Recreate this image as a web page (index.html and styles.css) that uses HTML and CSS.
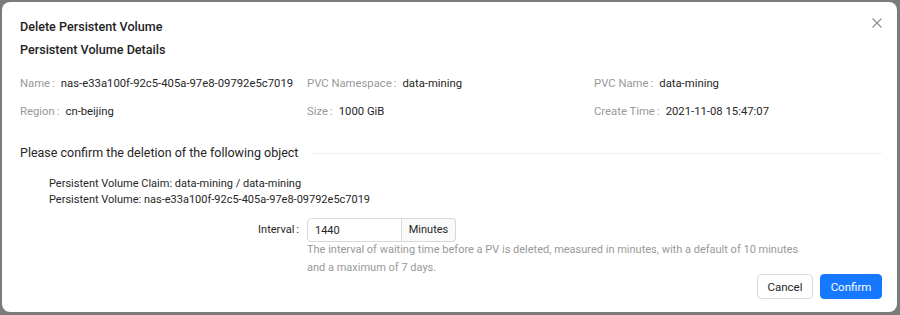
FILE: index.html
```html
<!DOCTYPE html>
<html>
<head>
<meta charset="utf-8">
<link rel="stylesheet" href="styles.css">
</head>
<body>
<div class="backdrop">
  <div class="modal">
    <div class="modal-header">
      <div class="modal-title">Delete Persistent Volume</div>
      <button class="close" aria-label="Close">
        <svg width="10" height="10" viewBox="0 0 10 10"><path d="M0.5 0.5L9.5 9.5M9.5 0.5L0.5 9.5" stroke="#8c8c8c" stroke-width="1.1" fill="none"/></svg>
      </button>
    </div>
    <div class="section-title">Persistent Volume Details</div>
    <div class="details">
      <div class="item"><span class="label">Name</span><span class="colon">:</span><span class="value">nas-e33a100f-92c5-405a-97e8-09792e5c7019</span></div>
      <div class="item"><span class="label">PVC Namespace</span><span class="colon">:</span><span class="value">data-mining</span></div>
      <div class="item"><span class="label">PVC Name</span><span class="colon">:</span><span class="value">data-mining</span></div>
      <div class="item"><span class="label">Region</span><span class="colon">:</span><span class="value">cn-beijing</span></div>
      <div class="item"><span class="label">Size</span><span class="colon">:</span><span class="value">1000 GiB</span></div>
      <div class="item"><span class="label">Create Time</span><span class="colon">:</span><span class="value">2021-11-08 15:47:07</span></div>
    </div>
    <div class="divider"><span class="divider-text">Please confirm the deletion of the following object</span><span class="divider-line"></span></div>
    <div class="objects">
      <div>Persistent Volume Claim: data-mining / data-mining</div>
      <div>Persistent Volume: nas-e33a100f-92c5-405a-97e8-09792e5c7019</div>
    </div>
    <div class="form-row">
      <div class="form-label">Interval<span class="colon">:</span></div>
      <div class="form-control">
        <div class="input-group">
          <input class="input" value="1440">
          <span class="addon">Minutes</span>
        </div>
        <div class="help">The interval of waiting time before a PV is deleted, measured in minutes, with a default of 10 minutes and a maximum of 7 days.</div>
      </div>
    </div>
    <div class="footer">
      <button class="btn">Cancel</button>
      <button class="btn btn-primary">Confirm</button>
    </div>
  </div>
</div>
</body>
</html>
```
FILE: styles.css
```css
* { box-sizing: border-box; }
html, body { margin: 0; padding: 0; }
body {
  background: #7b7b7b;
  font-family: Roboto, "Liberation Sans", sans-serif;
  color: #262626;
  width: 900px;
  height: 315px;
  overflow: hidden;
}
.backdrop { padding: 2px 3px 0 2px; }
.modal {
  background: #fff;
  border-radius: 8px;
  height: 310px;
  padding: 15px 15px 0 18px;
}
.modal-header {
  display: flex;
  justify-content: space-between;
  align-items: center;
  height: 18px;
}
.modal-title { font-size: 12.6px; font-weight: 500; color: #1f1f1f; }
.close {
  border: 0; background: none; padding: 0; margin-right: 0; margin-top: -6px;
  width: 10px; height: 10px; display: flex; cursor: pointer;
}
.section-title {
  margin-top: 6px;
  font-size: 12.6px; font-weight: 500; color: #1f1f1f;
  line-height: 18px;
}
.details {
  display: grid;
  grid-template-columns: repeat(3, 287px);
  row-gap: 12px;
  margin-top: 17px;
  font-size: 11.3px;
  line-height: 16px;
  white-space: nowrap;
}
.item { display: flex; }
.label { color: #999; }
.colon { color: #999; margin: 0 6px 0 2px; }
.value { color: #262626; }
.divider {
  display: flex; align-items: center;
  margin-top: 24px;
  font-size: 12.5px; line-height: 18px;
}
.divider-text { padding-right: 14px; color: #262626; }
.divider-line { flex: 1; border-top: 1px solid #f0f0f0; }
.objects {
  margin-top: 14px;
  padding-left: 29px;
  font-size: 11px; line-height: 16px;
  color: #262626;
}
.form-row {
  display: flex;
  margin-top: 10px;
  font-size: 11px;
}
.form-label {
  width: 287px;
  text-align: right;
  line-height: 24px;
  color: #262626;
}
.form-label .colon { color: #262626; margin: 0 8px 0 2px; }
.form-control { width: 495px; }
.input-group { display: flex; width: 149px; height: 24px; }
.input {
  width: 95px;
  border: 1px solid #d9d9d9;
  border-radius: 4px 0 0 4px;
  font: inherit; font-size: 11px;
  padding: 0 7px;
  color: #262626;
  outline: none;
}
.addon {
  flex: 1;
  background: #fafafa;
  border: 1px solid #d9d9d9;
  border-left: 0;
  border-radius: 0 4px 4px 0;
  line-height: 22px;
  text-align: center;
  color: #262626;
}
.help {
  color: #999;
  line-height: 18px;
  margin-top: -1px;
}
.footer {
  display: flex;
  justify-content: flex-end;
  gap: 7px;
  margin-top: -3px;
}
.btn {
  font: inherit; font-size: 11.5px;
  height: 25px;
  width: 56px;
  padding: 0;
  border: 1px solid #d9d9d9;
  border-radius: 4px;
  background: #fff;
  color: #262626;
}
.btn-primary {
  width: 62px;
  background: #1677ff;
  border-color: #1677ff;
  color: #fff;
}
```
